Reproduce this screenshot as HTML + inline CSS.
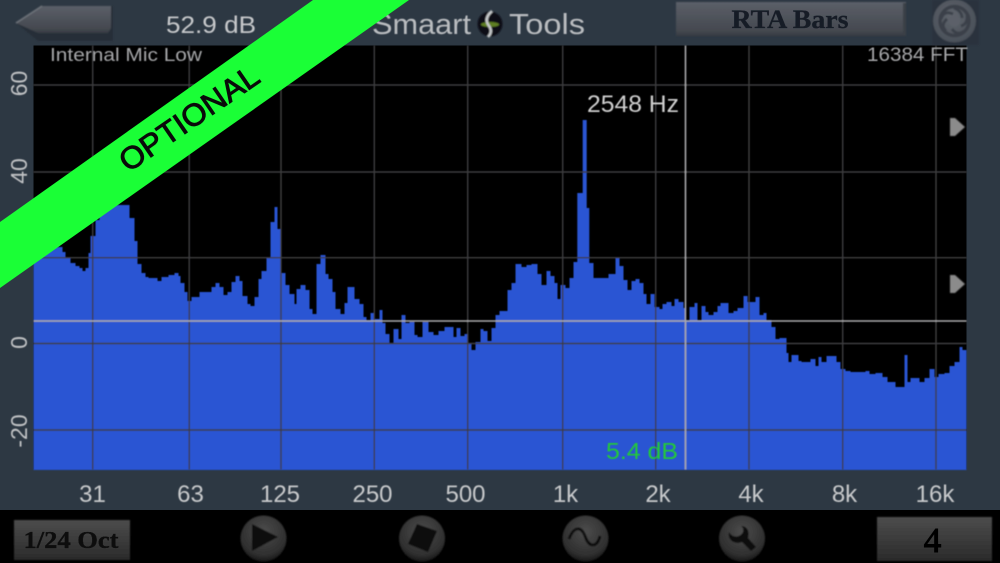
<!DOCTYPE html>
<html>
<head>
<meta charset="utf-8">
<style>
html,body{margin:0;padding:0;background:#000;width:1000px;height:563px;overflow:hidden}
svg{display:block}
.s{font-family:"Liberation Sans",sans-serif}
.f{font-family:"Liberation Serif",serif;font-weight:bold}
</style>
</head>
<body>
<svg width="1000" height="563" viewBox="0 0 1000 563" xmlns="http://www.w3.org/2000/svg">
<defs>
<clipPath id="pl"><rect x="33.5" y="45.5" width="933" height="424.500"/></clipPath>
<filter id="b" x="-5%" y="-5%" width="110%" height="110%"><feGaussianBlur stdDeviation="0.45"/></filter>
<filter id="b2" x="-30%" y="-30%" width="160%" height="160%"><feGaussianBlur stdDeviation="0.7"/></filter>
<filter id="t" x="-10%" y="-30%" width="120%" height="160%"><feGaussianBlur stdDeviation="0.5"/></filter>
<filter id="t2" x="-10%" y="-30%" width="120%" height="160%"><feGaussianBlur stdDeviation="0.3"/></filter>
<linearGradient id="btn" x1="0" y1="0" x2="0" y2="1"><stop offset="0" stop-color="#5b5f68"/><stop offset=".85" stop-color="#44484f"/><stop offset="1" stop-color="#353a42"/></linearGradient>
<linearGradient id="dk" x1="0" y1="0" x2="0" y2="1"><stop offset="0" stop-color="#4c4c4c"/><stop offset="1" stop-color="#2a2a2a"/></linearGradient>
<radialGradient id="rd" cx=".5" cy=".35" r=".7"><stop offset="0" stop-color="#4c4c4c"/><stop offset=".75" stop-color="#2e2e2e"/><stop offset="1" stop-color="#0e0e0e"/></radialGradient>
<radialGradient id="ap" cx=".45" cy=".4" r=".65"><stop offset="0" stop-color="#5f646c"/><stop offset="1" stop-color="#484e57"/></radialGradient>
</defs>

<rect width="1000" height="563" fill="#2d3843"/>
<rect y="510" width="1000" height="53" fill="#000"/>

<rect x="33.5" y="45.5" width="933" height="424" fill="#000"/>

<g filter="url(#b)">
<g clip-path="url(#pl)">
<path transform="translate(2.5 0)" fill="#2b55d3" d="M28 470V247H60V252H63V258H68V263H73V266H77V268H80V271H83V268H86V253H88V236H93V220H97V205H127V218H132V241H135V264H139V273H143V277H146V278H155V281H159V277H166V275H172V273H176V276H178V283H182V292H185V301H189V297H197V292H209V287H213V283H217V287H221V295H225V292H229V282H233V276H237V281H240V296H245V304H248V306H252V297H256V279H259V271H264V258H268V222H272V207H275V229H278V273H283V285H287V294H292V304H294V289H298V285H303V290H307V309H310V314H314V264H318V255H323V274H326V279H330V292H333V309H338V314H342V303H345V287H352V299H357V304H361V317H364V320H368V313H372V319H377V310H380V323H383V334H387V343H391V329H396V339H399V315H403V323H407V322H412V335H415V337H420V322H426V332H431V335H436V331H442V327H451V337H454V328H458V336H462V334H466V343H469V350H473V342H478V329H481V331H485V341H489V328H493V315H497V311H505V290H509V283H513V264H519V267H524V265H529V264H535V274H539V285H544V271H548V276H552V283H555V299H558V285H563V288H567V278H571V262H574.800V193H580.200V120H584.200V208H586.800V263H591V278H606V274H613V258H617V266H621V280H625V290H629V281H633V279H637V283H641V294H644V304H648V294H652V307H657V309H660V304H664V302H669V306H672V299H676V302H681V308H683V320H687V307H692V303H695V320H699V306H703V312H706V315H711V312H715V306H718V303H726V313H731V311H735V308H741V296H745V302H749V302H753V297H757V315H761V313H764V320H769V327H773V339H777V338H784V353H786V362H789V355H796V361H799V362H808V359H813V366H816V357H819V362H824V356H834V362H838V369H843V371H848V372H863V371H867V374H873V373H880V377H885V382H893V387H902V355H905V382H908V378H917V382H922V378H927V369H932V377H936V374H942V373H947V366H952V362H957V347H960V350H964V353H972V470Z"/>
</g>
<g stroke="#3d3d3f" stroke-width="1.4">
<path d="M92.7 45.5V469.5M189.2 45.5V469.5M281 45.5V469.5M374.3 45.5V469.5M467.7 45.5V469.5M562.7 45.5V469.5M655.7 45.5V469.5M749 45.5V469.5M842.7 45.5V469.5M936 45.5V469.5"/>
<path d="M33.5 85H966.5M33.5 172H966.5M33.5 257.7H966.5M33.5 343.5H966.5M33.5 430H966.5"/>
</g>
<path d="M33.5 321H966.5M685.5 45.5V469.5" stroke="#a9a9ab" stroke-width="1.6"/>
</g>

<g class="s" fill="#c4c6c8" filter="url(#t)">
<text x="166" y="33" font-size="24" fill="#c6c8ca" textLength="90" lengthAdjust="spacingAndGlyphs">52.9 dB</text>
<text x="372" y="34" font-size="29" fill="#b9bcbf" textLength="99" lengthAdjust="spacingAndGlyphs">Smaart</text>
<text x="509" y="34" font-size="29" fill="#b9bcbf" textLength="76" lengthAdjust="spacingAndGlyphs">Tools</text>
<text x="50" y="61" font-size="18.500" fill="#a5a6a8" textLength="152" lengthAdjust="spacingAndGlyphs">Internal Mic Low</text>
<text x="867" y="61" font-size="19.500" fill="#a5a6a8" textLength="101" lengthAdjust="spacingAndGlyphs">16384 FFT</text>
<text x="587" y="112" font-size="24" fill="#cfcfcf" textLength="92" lengthAdjust="spacingAndGlyphs">2548 Hz</text>
<text x="606" y="459" font-size="23" fill="#22c83a" textLength="72" lengthAdjust="spacingAndGlyphs">5.4 dB</text>
<g font-size="24" text-anchor="middle" fill="#c7c9cb">
<text x="92.5" y="502">31</text>
<text x="190.5" y="502">63</text>
<text x="280" y="502">125</text>
<text x="372.5" y="502">250</text>
<text x="465.5" y="502">500</text>
<text x="565.5" y="502">1k</text>
<text x="658" y="502">2k</text>
<text x="751" y="502">4k</text>
<text x="844.5" y="502">8k</text>
<text x="935" y="502">16k</text>
</g>
<g font-size="23" text-anchor="middle" fill="#c0c2c4">
<text transform="translate(27 83.500) rotate(-90)">60</text>
<text transform="translate(27 171) rotate(-90)">40</text>
<text transform="translate(27 342.500) rotate(-90)">0</text>
<text transform="translate(27 431) rotate(-90)">-20</text>
</g>
</g>

<g fill="#8b8b8b" filter="url(#b2)">
<path d="M950 118H955L965 127L955 136H950Z"/>
<path d="M950 275H955L965 284L955 293H950Z"/>
</g>

<g filter="url(#b2)">
<path d="M42 6H113V41H38L16 23Z" fill="#262f39"/>
<path d="M42 6H111V28L108 33H38L16 23Z" fill="url(#btn)"/>
<path d="M16 23L42 6" stroke="#70757c" stroke-width="1.5"/>
<rect x="676" y="2" width="230" height="34" fill="url(#btn)"/>
<rect x="903" y="3" width="3" height="32" fill="#3a3f47"/>
<rect x="932" y="0" width="47" height="45" fill="#2a333d"/>
<circle cx="954.500" cy="21" r="21.500" fill="url(#ap)"/>
<circle cx="954.500" cy="21" r="14.500" fill="none" stroke="#3b4149" stroke-width="3.500"/>
<g stroke="#3b4149" stroke-width="2.800" fill="none">
<path d="M954 8Q962 11 962 18M967 15Q968 24 961 26M964 31Q957 36 952 29M946 31Q940 25 947 19M941 19Q944 10 953 14"/>
</g>
<circle cx="954.500" cy="21" r="5.500" fill="#5c6169"/>
<circle cx="490" cy="24" r="12.500" fill="#0e1113"/>
<ellipse cx="490" cy="24.500" rx="9" ry="2.500" fill="#5f7f22"/>
<path d="M492 11C485 17 486 22 489 26C492 30 491 34 488 37" stroke="#c8cacc" stroke-width="2.500" fill="none"/>
</g>
<text class="f" x="790" y="28" font-size="26" text-anchor="middle" fill="#161c27" stroke="#161c27" stroke-width=".3" textLength="117" lengthAdjust="spacingAndGlyphs" filter="url(#t2)">RTA Bars</text>

<g filter="url(#b2)">
<rect x="14" y="520" width="116" height="40" fill="url(#dk)"/>
<rect x="877" y="517" width="115" height="44" fill="url(#dk)"/>
<circle cx="263.500" cy="538.500" r="23" fill="url(#rd)"/>
<path d="M252 524L278 537L252 551Z" fill="#0c0c0c"/>
<circle cx="422" cy="538.500" r="23" fill="url(#rd)"/>
<path d="M417 524L437 531L428 552L408 544Z" fill="#0d0d0d"/>
<circle cx="585.500" cy="538.500" r="23" fill="url(#rd)"/>
<path d="M569 539C574 526 581 526 585 536C589 548 597 548 600 536" fill="none" stroke="#080808" stroke-width="2.800"/>
<circle cx="742" cy="538.500" r="23" fill="url(#rd)"/>
<path d="M729 532C733 539 741 537 743 532C744 528 742 527 741 526C747 526 750 531 748 538L756 547L751 551L742 542C735 545 727 540 729 532Z" fill="#0a0a0a"/>
</g>
<g filter="url(#t2)">
<text class="f" x="71" y="548" font-size="24" text-anchor="middle" fill="#0a0a0a" stroke="#0a0a0a" stroke-width=".3" textLength="95" lengthAdjust="spacingAndGlyphs">1/24 Oct</text>
<text x="932.500" y="552" font-family="Liberation Serif,serif" font-size="35" text-anchor="middle" fill="#050505" stroke="#050505" stroke-width="1">4</text>
</g>

<polygon points="313,0 409,0 0,288 0,222" fill="#1aff36"/>
<text class="s" transform="translate(195 127) rotate(-34.500)" font-size="31" text-anchor="middle" fill="#0a0a0a" stroke="#0a0a0a" stroke-width=".9" textLength="162" lengthAdjust="spacingAndGlyphs">OPTIONAL</text>
</svg>
</body>
</html>
